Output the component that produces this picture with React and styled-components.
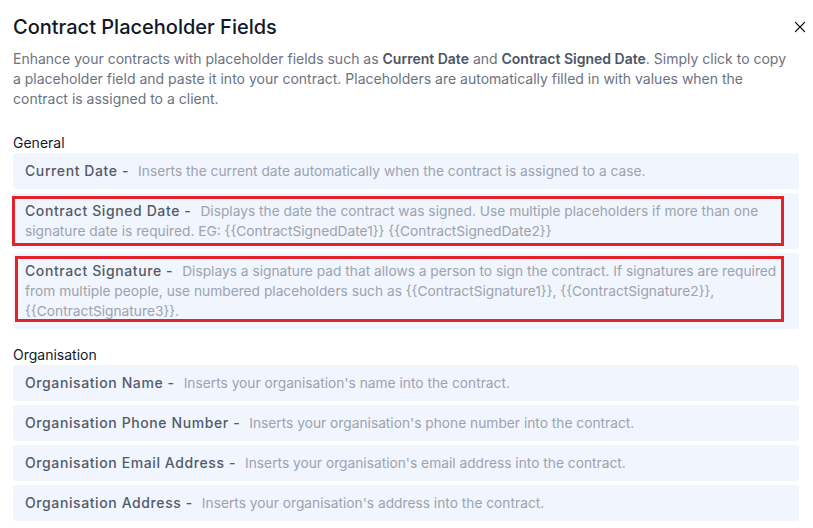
import React from 'react';
import styled, { createGlobalStyle } from 'styled-components';
import { X } from 'lucide-react';

const GlobalStyle = createGlobalStyle`
  html, body {
    margin: 0;
    padding: 0;
    background: #ffffff;
  }
  body {
    font-family: Inter, "Noto Sans", sans-serif;
    -webkit-font-smoothing: antialiased;
  }
`

const Modal = styled.div`
  width: 813px;
  box-sizing: border-box;
  padding: 13px 14px 0 13px;
  background: #ffffff;
`

const Header = styled.div`
  display: flex;
  align-items: center;
  justify-content: space-between;
  height: 28px;
`

const Title = styled.h2`
  margin: 0;
  font-size: 20px;
  font-weight: 500;
  line-height: 28px;
  color: #111827;
`

const CloseButton = styled.button`
  display: flex;
  align-items: center;
  justify-content: center;
  width: 20px;
  height: 20px;
  padding: 0;
  margin-right: -11px;
  border: none;
  background: transparent;
  color: #111827;
  cursor: pointer;
`

const Intro = styled.p`
  margin: 8px 0 0;
  padding-right: 10px;
  font-size: 14px;
  line-height: 20px;
  color: #6b7280;

  strong {
    font-weight: 600;
    color: #4b5563;
  }
`

const Section = styled.div`
  margin-top: ${p => p.$gap}px;
`

const SectionTitle = styled.div`
  font-size: 14px;
  line-height: 20px;
  color: #111827;
`

const List = styled.div`
  display: flex;
  flex-direction: column;
  gap: 4px;
`

const Row = styled.div`
  position: relative;
  padding: 8px 12px;
  border-radius: 3px;
  background: #f1f5fd;
  font-size: 13.75px;
  line-height: 20px;
  color: #9ca3af;
  cursor: pointer;
`

const Label = styled.span`
  font-size: 14px;
  font-weight: 500;
  letter-spacing: 0.6px;
  color: #535b69;
  margin-right: 9px;
`

const Highlight = styled.div`
  position: absolute;
  top: ${p => p.$inset[0]}px;
  right: ${p => p.$inset[1]}px;
  bottom: ${p => p.$inset[2]}px;
  left: ${p => p.$inset[3]}px;
  border: 3px solid #e3222a;
  pointer-events: none;
`

const general = [
  {
    label: 'Current Date',
    text: 'Inserts the current date automatically when the contract is assigned to a case.'
  },
  {
    label: 'Contract Signed Date',
    text: 'Displays the date the contract was signed. Use multiple placeholders if more than one signature date is required. EG: {{ContractSignedDate1}} {{ContractSignedDate2}}',
    highlight: [3, 15, 3, -1]
  },
  {
    label: 'Contract Signature',
    text: 'Displays a signature pad that allows a person to sign the contract. If signatures are required from multiple people, use numbered placeholders such as {{ContractSignature1}}, {{ContractSignature2}}, {{ContractSignature3}}.',
    highlight: [3, 15, 7, 2]
  }
];

const organisation = [
  { label: 'Organisation Name', text: "Inserts your organisation's name into the contract." },
  { label: 'Organisation Phone Number', text: "Inserts your organisation's phone number into the contract." },
  { label: 'Organisation Email Address', text: "Inserts your organisation's email address into the contract." },
  { label: 'Organisation Address', text: "Inserts your organisation's address into the contract." }
];

function FieldRow({ field }) {
  return (
    <Row>
      <Label>{field.label} -</Label>
      {field.text}
      {field.highlight && <Highlight $inset={field.highlight} />}
    </Row>
  );
}

export default function App() {
  return (
    <>
      <GlobalStyle />
      <Modal>
        <Header>
          <Title>Contract Placeholder Fields</Title>
          <CloseButton aria-label="Close">
            <X size={18} strokeWidth={1.6} />
          </CloseButton>
        </Header>
        <Intro>
          Enhance your contracts with placeholder fields such as <strong>Current Date</strong> and{' '}
          <strong>Contract Signed Date</strong>. Simply click to copy a placeholder field and paste it
          into your contract. Placeholders are automatically filled in with values when the contract is
          assigned to a client.
        </Intro>
        <Section $gap={24}>
          <SectionTitle>General</SectionTitle>
          <List>
            {general.map(f => <FieldRow key={f.label} field={f} />)}
          </List>
        </Section>
        <Section $gap={16}>
          <SectionTitle>Organisation</SectionTitle>
          <List>
            {organisation.map(f => <FieldRow key={f.label} field={f} />)}
          </List>
        </Section>
      </Modal>
    </>
  );
}
